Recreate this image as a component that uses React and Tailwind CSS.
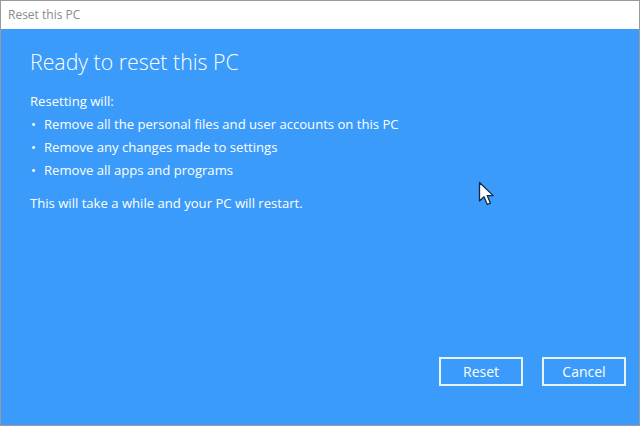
import React from "react";

function Cursor() {
  return (
    <svg width="18" height="26" viewBox="0 0 18 26" className="absolute left-[477px] top-[180px]">
      <path
        d="M1.5 1.5 L1.5 20 L6 15.8 L9.3 23.5 L12.4 22.2 L9.2 14.6 L15.2 14.6 Z"
        fill="#ffffff"
        stroke="#0d2a4a"
        strokeWidth="1.3"
        strokeLinejoin="round"
      />
    </svg>
  );
}

export default function App() {
  const items = [
    "Remove all the personal files and user accounts on this PC",
    "Remove any changes made to settings",
    "Remove all apps and programs",
  ];

  return (
    <div
      className="relative w-[640px] h-[426px] flex flex-col border border-[#9a9a9a] bg-white overflow-hidden"
      style={{ fontFamily: '"Open Sans", "Noto Sans", sans-serif' }}
    >
      <div className="h-[28px] shrink-0 bg-white flex items-center pl-[7px] text-[12px] text-[#8a8a8a]">
        Reset this PC
      </div>

      <div className="flex-1 bg-[#3b9bfb] flex flex-col text-white pl-[29px] pr-[13px] pb-[39px]">
        <h1 className="mt-[18px] text-[21.3px] font-light leading-[30px]">
          Ready to reset this PC
        </h1>

        <p className="mt-[13px] text-[13.1px] leading-[23px]">Resetting will:</p>
        <ul className="text-[13.1px] leading-[23px]">
          {items.map((t) => (
            <li key={t} className="flex">
              <span className="w-[14px] pl-[1px]">•</span>
              <span>{t}</span>
            </li>
          ))}
        </ul>

        <p className="mt-[10px] text-[13.1px] leading-[23px]">
          This will take a while and your PC will restart.
        </p>

        <div className="mt-auto flex justify-end gap-[19px]">
          <button className="w-[84px] h-[29px] border-2 border-[#e8f3ff] text-[14px] text-white">
            Reset
          </button>
          <button className="w-[84px] h-[29px] border-2 border-[#e8f3ff] text-[14px] text-white">
            Cancel
          </button>
        </div>
      </div>

      <Cursor />
    </div>
  );
}
